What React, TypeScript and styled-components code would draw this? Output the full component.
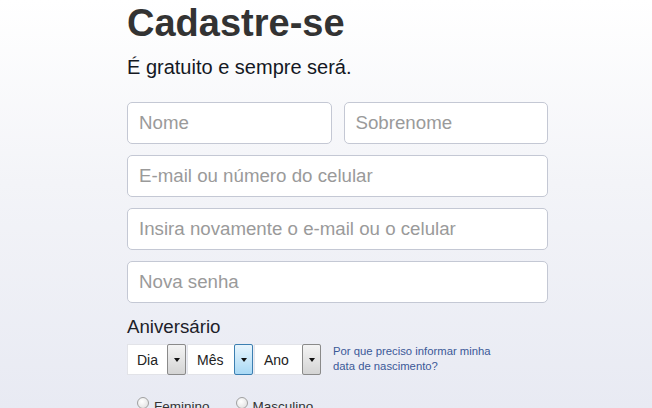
import React from 'react'
import styled, { createGlobalStyle, css } from 'styled-components'

const GlobalStyle = createGlobalStyle`
  html, body {
    margin: 0;
    padding: 0;
  }

  body {
    font-family: 'Liberation Sans', Arial, sans-serif;
  }
`

const Page = styled.div`
  width: 652px;
  height: 408px;
  overflow: hidden;
  background: linear-gradient(to bottom, #ffffff 0%, #f3f4f8 45%, #e8eaf3 100%);
`

const Form = styled.div`
  width: 421px;
  margin-left: 127px;
  padding-top: 4px;
`

const Title = styled.h1`
  margin: 0;
  font-size: 38px;
  line-height: 38px;
  font-weight: bold;
  color: #333333;
`

const Subtitle = styled.p`
  margin: 15px 0 0;
  font-size: 20px;
  line-height: 20px;
  color: #141823;
`

const Fields = styled.div`
  display: grid;
  grid-template-columns: 1fr 1fr;
  column-gap: 12px;
  row-gap: 11px;
  margin-top: 25px;
`

const Field = styled.input<{ $wide?: boolean }>`
  box-sizing: border-box;
  width: 100%;
  height: 42px;
  padding: 0 11px;
  border: 1px solid #c4c8d4;
  border-radius: 5px;
  background: #ffffff;
  font-family: 'Liberation Sans', Arial, sans-serif;
  font-size: 18.7px;
  color: #333333;
  outline: none;
  ${(p) =>
    p.$wide &&
    css`
      grid-column: 1 / -1;
    `}

  &::placeholder {
    color: #9a9a9a;
  }
`

const Label = styled.div`
  margin-top: 14px;
  font-size: 18.7px;
  line-height: 19px;
  color: #1d2129;
`

const BirthRow = styled.div`
  display: flex;
  align-items: flex-start;
  margin-top: 8px;
`

const Selects = styled.div`
  display: flex;
  gap: 1px;
`

const Select = styled.div<{ $width: number }>`
  box-sizing: border-box;
  display: flex;
  align-items: stretch;
  width: ${(p) => p.$width}px;
  height: 31px;
  background: #ffffff;
  border: 1px solid #e2e3e8;
  border-right: none;
`

const SelectText = styled.span`
  flex: 1;
  display: flex;
  align-items: center;
  padding-left: 9px;
  font-size: 14px;
  color: #222222;
`

const ArrowBox = styled.span<{ $hover?: boolean }>`
  box-sizing: border-box;
  width: 19px;
  margin: -1px 0;
  display: flex;
  align-items: center;
  justify-content: center;
  border: 1px solid #8a8a8a;
  border-radius: 2px;
  background: linear-gradient(to bottom, #f4f4f4, #d4d4d4);
  ${(p) =>
    p.$hover &&
    css`
      border-color: #3c7fb1;
      background: linear-gradient(to bottom, #e8f5fd, #a9d9f5);
    `}

  &::after {
    content: '';
    width: 0;
    height: 0;
    border-left: 3.5px solid transparent;
    border-right: 3.5px solid transparent;
    border-top: 4px solid #111111;
  }
`

const HelpLink = styled.a`
  margin-left: 12px;
  width: 170px;
  font-size: 11.3px;
  line-height: 15px;
  color: #3b5998;
  text-decoration: none;
`

const Genders = styled.div`
  display: flex;
  gap: 26px;
  margin-top: 21px;
  padding-left: 10px;
`

const Gender = styled.label`
  display: flex;
  align-items: flex-start;
  gap: 5px;
  font-size: 13.5px;
  line-height: 16px;
  color: #333333;
`

const Radio = styled.span`
  box-sizing: border-box;
  width: 12px;
  height: 12px;
  margin-top: 1px;
  border: 1px solid #a0a0a0;
  border-radius: 50%;
  background: radial-gradient(circle at 40% 35%, #ffffff, #dcdcdc);
`

const GenderText = styled.span`
  margin-top: 3px;
`

export default function App() {
  return (
    <Page>
      <GlobalStyle />
      <Form>
        <Title>Cadastre-se</Title>
        <Subtitle>É gratuito e sempre será.</Subtitle>
        <Fields>
          <Field placeholder='Nome' />
          <Field placeholder='Sobrenome' />
          <Field $wide placeholder='E-mail ou número do celular' />
          <Field $wide placeholder='Insira novamente o e-mail ou o celular' />
          <Field $wide type='password' placeholder='Nova senha' />
        </Fields>
        <Label>Aniversário</Label>
        <BirthRow>
          <Selects>
            <Select $width={59}>
              <SelectText>Dia</SelectText>
              <ArrowBox />
            </Select>
            <Select $width={66}>
              <SelectText>Mês</SelectText>
              <ArrowBox $hover />
            </Select>
            <Select $width={67}>
              <SelectText>Ano</SelectText>
              <ArrowBox />
            </Select>
          </Selects>
          <HelpLink href='#'>
            Por que preciso informar minha data de nascimento?
          </HelpLink>
        </BirthRow>
        <Genders>
          <Gender>
            <Radio />
            <GenderText>Feminino</GenderText>
          </Gender>
          <Gender>
            <Radio />
            <GenderText>Masculino</GenderText>
          </Gender>
        </Genders>
      </Form>
    </Page>
  )
}
